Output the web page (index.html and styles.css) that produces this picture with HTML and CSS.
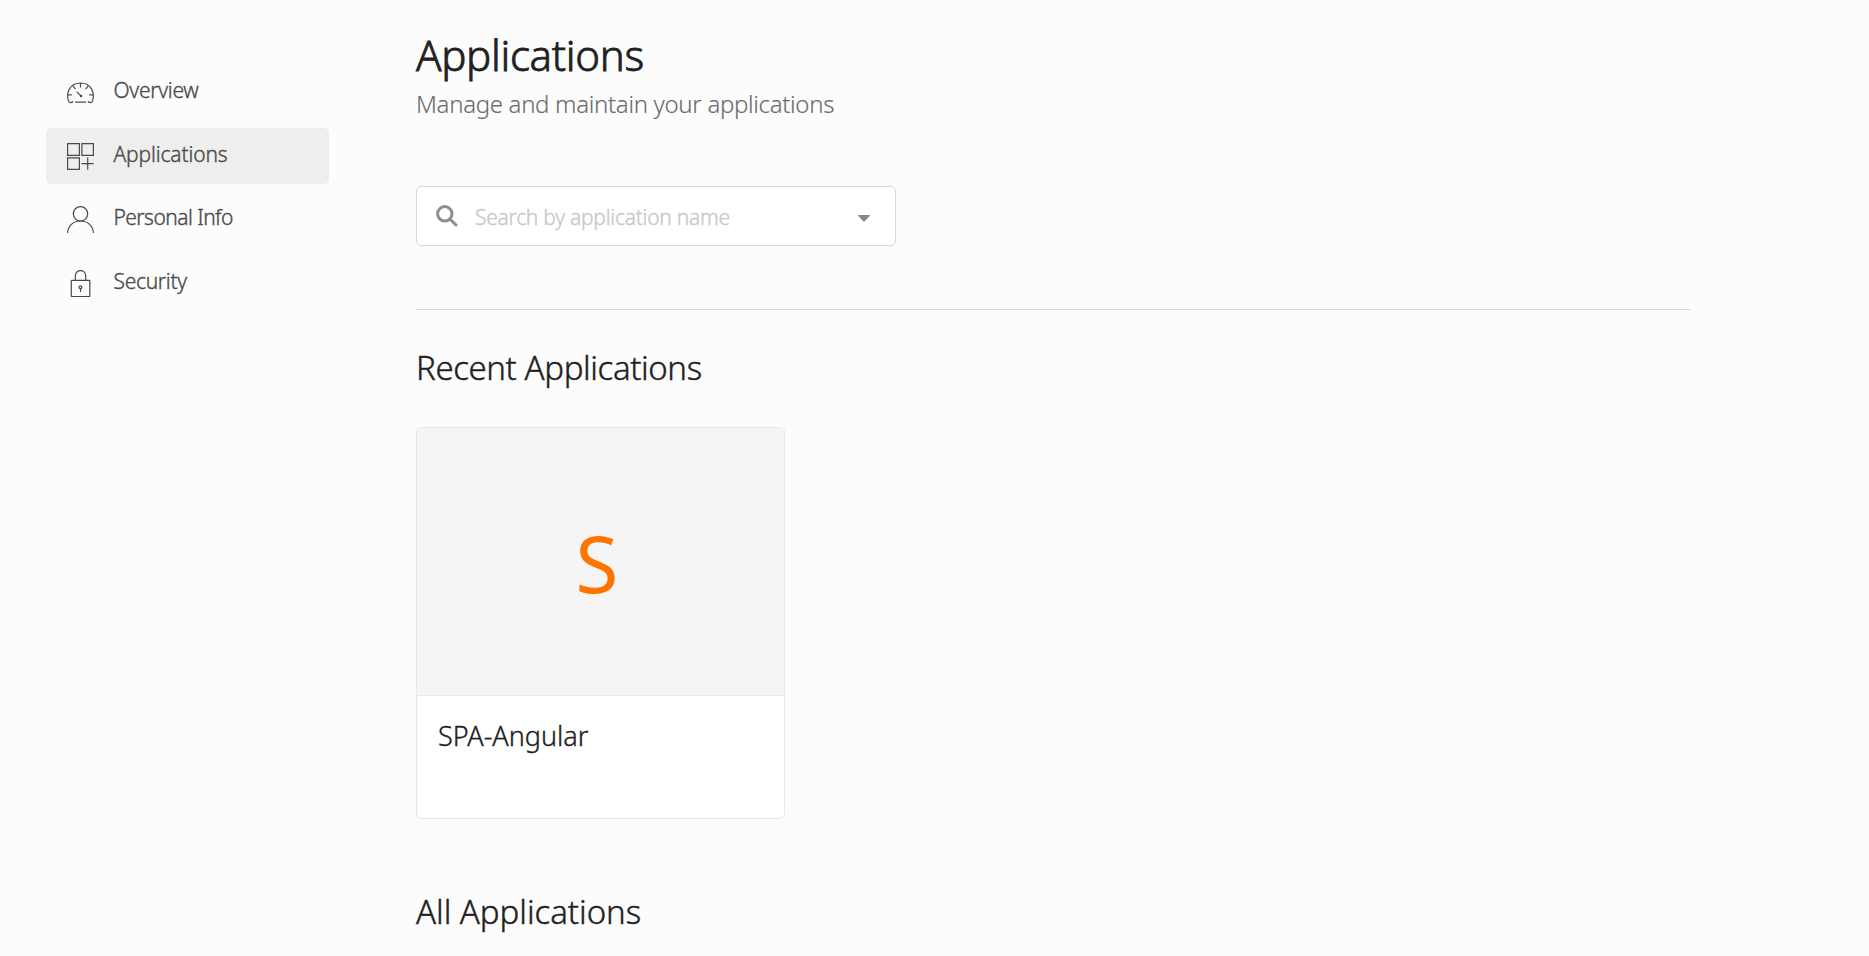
FILE: index.html
```html
<!DOCTYPE html>
<html lang="en">
<head>
<meta charset="utf-8">
<title>Applications</title>
<link rel="stylesheet" href="styles.css">
</head>
<body>
<div class="layout">
  <nav class="sidebar">
    <a class="nav-item">
      <svg class="nav-icon" viewBox="0 0 27 27"><path d="M6 22.300C5.400 23.800 2.500 24 1.800 22.800C-1.600 14 2.800 4 13.500 4S28.600 14 25.200 22.800C24.500 24 21.600 23.800 21 22.300M8 23.200H19M13.500 4V8.500M6 7.200L8.500 10.200M21 7.200L18.500 10.200M1 15.800H4.800M26 15.800H22.200M9.600 12.600L14 17"/><circle class="dot" cx="14.100" cy="17" r="1.200"/></svg>
      <span class="nav-label overview">Overview</span>
    </a>
    <a class="nav-item active">
      <svg class="nav-icon apps" viewBox="0 0 27 27"><path d="M.6.6H12.400V12.400H.6ZM14.900.6H26.400V12.400H14.900ZM.6 14.900H12.400V26.400H.6ZM20.700 14.500V26.800M14.500 20.600H26.800"/></svg>
      <span class="nav-label">Applications</span>
    </a>
    <a class="nav-item">
      <svg class="nav-icon" viewBox="0 0 27 27"><circle cx="13.500" cy="7.800" r="7.200"/><path d="M.6 27C1 20 6 15 13.500 15S26 20 26.400 27"/></svg>
      <span class="nav-label personal">Personal Info</span>
    </a>
    <a class="nav-item">
      <svg class="nav-icon" viewBox="0 0 27 27"><rect x="4.300" y="10.300" width="18.500" height="16.200" rx=".5"/><path d="M8.300 10V6C8.300-1.100 18.700-1.100 18.700 6V10M13.500 18.500V22"/><circle cx="13.500" cy="17.300" r="1.400"/></svg>
      <span class="nav-label security">Security</span>
    </a>
  </nav>
  <main class="content">
    <h1 class="title">Applications</h1>
    <p class="subtitle">Manage and maintain your applications</p>
    <div class="search">
      <svg class="search-icon" viewBox="0 0 22 22"><circle cx="8.800" cy="8.800" r="7.200"/><path d="M14 14L20 20"/></svg>
      <span class="placeholder">Search by application name</span>
      <svg class="caret" viewBox="0 0 12 7"><path d="M.5 0H11.500Q12.300.3 11.700 1L6.800 6.200Q6 7 5.200 6.200L.3 1Q-.3.3.5 0Z"/></svg>
    </div>
    <hr class="divider">
    <h2 class="section-title">Recent Applications</h2>
    <article class="card">
      <div class="card-image"><span class="initial">S</span></div>
      <div class="card-body">SPA-Angular</div>
    </article>
    <h2 class="section-title all">All Applications</h2>
  </main>
</div>
</body>
</html>
```
FILE: styles.css
```css
* { box-sizing: border-box; }
body {
  margin: 0;
  height: 956px;
  overflow: hidden;
  background: #fcfcfc;
  color: #212121;
  font-family: "Noto Sans", "Open Sans", sans-serif;
  font-weight: 300;
  -webkit-text-stroke: .35px currentColor;
}
.layout { display: flex; padding-left: 46px; }
.sidebar {
  display: flex;
  flex-direction: column;
  gap: 7.67px;
  width: 283px;
  margin-right: 87px;
  padding-top: 64.33px;
}
.nav-item {
  display: flex;
  align-items: center;
  height: 56px;
  padding: 0 21px;
  border-radius: 5px;
  color: #4a4a4a;
}
.nav-item.active { background: #eee; }
.nav-icon {
  width: 27px;
  height: 27px;
  margin-right: 19.500px;
  fill: none;
  stroke: #4a4a4a;
  stroke-width: 1.200;
}
.nav-icon.apps { margin-top: 1px; }
.nav-icon .dot { fill: #4a4a4a; stroke: none; }
.nav-label {
  padding-bottom: 4px;
  font-size: 21px;
  line-height: 30px;
  letter-spacing: -.15px;
}
.nav-label.overview { letter-spacing: -.28px; }
.nav-label.personal { padding-bottom: 5px; letter-spacing: -.55px; }
.nav-label.security { letter-spacing: -.3px; }
.content { width: 1275px; padding-top: 27px; }
.title {
  margin: 0;
  font-size: 42px;
  font-weight: 300;
  line-height: 56px;
  letter-spacing: -.3px;
  -webkit-text-stroke-width: .8px;
}
.subtitle {
  margin: 4px 0 65px;
  color: #6b6b6b;
  font-size: 24px;
  line-height: 34px;
  letter-spacing: -.32px;
  -webkit-text-stroke-width: .1px;
}
.search {
  display: flex;
  align-items: center;
  width: 480px;
  height: 60px;
  padding: 2px 25px 0 19px;
  border: 1px solid #d9d9d9;
  border-radius: 5px;
  background: #fff;
}
.search-icon {
  width: 22px;
  height: 22px;
  margin: 0 17px 2px 0;
  fill: none;
  stroke: #8e8e8e;
  stroke-width: 3;
  stroke-linecap: round;
}
.placeholder {
  flex: 1;
  color: #c8c8c8;
  font-size: 21px;
  line-height: 30px;
  letter-spacing: -.26px;
}
.caret { width: 12px; height: 7px; margin-top: 2px; fill: #878787; }
.divider { height: 1px; margin: 63px 0 36px; border: 0; background: #d9d9d9; }
.section-title {
  margin: 0;
  font-size: 33px;
  font-weight: 300;
  line-height: 44px;
  letter-spacing: -.4px;
  -webkit-text-stroke-width: .4px;
}
.section-title.all { margin-top: 71px; letter-spacing: -.05px; }
.card {
  width: 369px;
  height: 392px;
  margin-top: 37px;
  overflow: hidden;
  border: 1px solid #e7e7e7;
  border-radius: 5px;
  background: #fff;
}
.card-image {
  display: flex;
  align-items: center;
  justify-content: center;
  height: 268px;
  padding: 3px 7px 0 0;
  border-bottom: 1px solid #e7e7e7;
  background: #f5f5f5;
}
.initial { color: #ff7300; font-size: 78px; font-weight: 400; line-height: 100px; -webkit-text-stroke-width: 0; }
.card-body {
  padding: 22px 21px;
  font-size: 27px;
  line-height: 36px;
  letter-spacing: -.02px;
}
```
